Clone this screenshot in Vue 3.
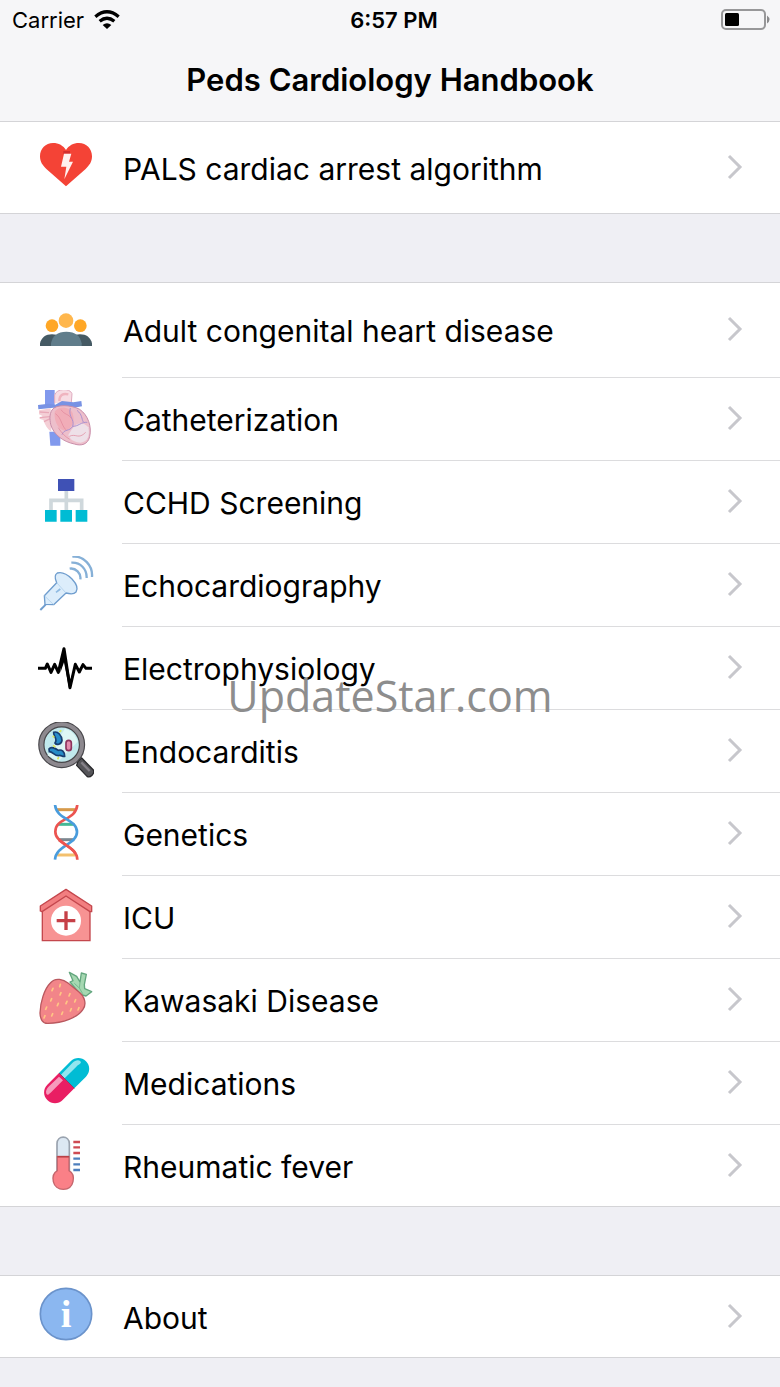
<template>
  <div class="handbook">
    <header class="nav">
      <div class="status">
        <div class="status-left">
          <span>Carrier</span>
          <svg class="wifi" viewBox="0 0 78 57" aria-hidden="true">
            <path d="M4 20Q39-9 74 20M17 34Q39 16 61 34" fill="none" stroke="#000" stroke-width="10" />
            <path d="M26 45Q39 35 52 45L39 57Z" />
          </svg>
        </div>
        <time class="clock">6:57 PM</time>
        <svg class="battery" viewBox="0 0 49 22" aria-hidden="true">
          <rect x="1" y="1" width="43" height="19" rx="4" fill="none" stroke="#979799" stroke-width="2" />
          <rect x="4" y="4" width="14" height="13" rx="1.5" fill="#000" />
          <path d="M46 6.5Q51 10.500 46 14.500Z" fill="#8a8a8c" />
        </svg>
      </div>
      <h1 class="title">Peds Cardiology Handbook</h1>
    </header>

    <main>
      <ul v-for="section in sections" :key="section.id" class="section" :class="section.id">
        <li v-for="item in section.items" :key="item.label">
          <a class="row" href="#">
            <svg class="icon" :viewBox="icons[item.icon].box" aria-hidden="true" v-html="icons[item.icon].art"></svg>
            <span class="cell">
              <span class="label">{{ item.label }}</span>
              <svg class="chevron" viewBox="0 0 16 26" aria-hidden="true">
                <path d="M2 2L13 13L2 24" />
              </svg>
            </span>
          </a>
        </li>
      </ul>
    </main>

    <div class="watermark">UpdateStar.com</div>
  </div>
</template>

<script setup>
const sections = [
  { id: 'arrest', items: [{ label: 'PALS cardiac arrest algorithm', icon: 'aed' }] },
  {
    id: 'topics',
    items: [
      { label: 'Adult congenital heart disease', icon: 'people' },
      { label: 'Catheterization', icon: 'heart' },
      { label: 'CCHD Screening', icon: 'chart' },
      { label: 'Echocardiography', icon: 'probe' },
      { label: 'Electrophysiology', icon: 'pulse' },
      { label: 'Endocarditis', icon: 'microbes' },
      { label: 'Genetics', icon: 'dna' },
      { label: 'ICU', icon: 'hospital' },
      { label: 'Kawasaki Disease', icon: 'strawberry' },
      { label: 'Medications', icon: 'pill' },
      { label: 'Rheumatic fever', icon: 'thermometer' },
    ],
  },
  { id: 'info', items: [{ label: 'About', icon: 'about' }] },
]

const icons = {
  aed: {
    box: '54 25 168 168',
    art: `<path d="M138 170L80 119C68 107 60 97 60 80C60 57 77 40 99 40C116 40 130 48 138 61C146 48 160 40 177 40C199 40 216 57 216 80C216 97 208 107 196 119Z" fill="#f44336"/>
      <path d="M130 64H150V72H130Z" fill="#d32f2f"/>
      <path d="M132 72H154L147 96H159L133 149L139 111H123Z" fill="#fff1ef"/>`,
  },
  people: {
    box: '54 18 168 168',
    art: `<path d="M60 153V145C64 128 77 118 96 118S124 126 128 153Z" fill="#455a64"/>
      <path d="M216 153V145C212 128 199 118 180 118S152 126 148 153Z" fill="#455a64"/>
      <path d="M93 153V145C98 122 112 110 139 110S180 122 185 145V153Z" fill="#607d8b"/>
      <circle cx="96" cy="92" r="19" fill="#ffa726"/>
      <circle cx="181" cy="92" r="19" fill="#ffa726"/>
      <circle cx="138" cy="77" r="22" fill="#ffb74d"/>`,
  },
  heart: {
    box: '54 285 168 168',
    art: `<path d="M75 285H104V330H75ZM88 410H121V452H91Z" fill="#8199ed"/>
      <path d="M104 325V300C109 280 150 278 156 296L154 323" fill="#f7dce3" stroke="#dfabc0" stroke-width="3"/>
      <path d="M118 318C118 301 128 294 145 298" fill="none" stroke="#efb4bf" stroke-width="7"/>
      <path d="M54 330L85 326L106 329L126 318L160 322L184 318L186 334L162 338L136 347L100 338L55 343Z" fill="#7892e4"/>
      <path d="M57 346L92 340L94 410C82 403 75 390 70 375L58 371L68 363L57 358Z" fill="#f4cfd6"/>
      <path d="M59 351L87 353M59 368L90 365M72 380L91 371" stroke="#e8a9b8" stroke-width="4"/>
      <path d="M96 345C107 327 153 329 179 343C204 360 216 395 209 425C204 448 184 454 163 447C129 440 100 418 92 388C89 371 88 359 96 345Z" fill="#edbfcb" stroke="#c98eaa" stroke-width="3"/>
      <path d="M104 350C119 329 151 337 158 355C166 382 156 399 137 407C119 406 101 385 104 350Z" fill="#f1adb8"/>
      <path d="M145 420C166 382 184 376 205 397C210 422 203 441 182 443C163 442 150 434 145 420Z" fill="#eee0e8"/>
      <path d="M151 339C144 367 165 372 158 394C149 410 132 401 126 419M158 394C174 395 184 380 202 382M171 346C188 360 184 371 190 381" fill="none" stroke="#ab91cf" stroke-width="3"/>
      <path d="M106 356C124 368 122 386 137 404M123 344C134 360 145 356 154 370M148 424C168 414 175 435 197 412M115 398C125 414 133 423 149 433" fill="none" stroke="#df8398" stroke-width="2"/>`,
  },
  chart: {
    box: '54 24 168 168',
    art: `<path d="M139 76V138M93 138V106H185V138" fill="none" stroke="#cfd8dc" stroke-width="11"/>
      <rect x="114" y="42" width="49" height="36" fill="#3f51b5"/>
      <path d="M75 135H110V170H75ZM121 135H156V170H121ZM167 135H202V170H167Z" fill="#00bcd4"/>`,
  },
  probe: {
    box: '54 273 168 168',
    art: `<g stroke="#6f9dce" stroke-width="4" stroke-linejoin="round">
        <path d="M61 435L77 419" fill="none" stroke-width="6"/>
        <path d="M75 418L73 392L110 353C105 342 102 330 112 324C126 320 142 328 156 342C169 356 175 371 168 381C162 388 149 387 138 384L101 419Z" fill="#dcedfb"/>
        <path d="M73 392L101 419M110 353L138 384" fill="none" stroke="#a5c8e8" stroke-width="2"/>
        <path d="M108 382L121 372" stroke-width="5" stroke="#8ebae2"/>
        <path d="M149 311C167 308 184 325 181 343M154 293C181 291 201 312 200 339M157 275C191 271 219 302 216 336" fill="none" stroke="#86b0d7" stroke-width="7"/>
      </g>`,
  },
  pulse: {
    box: '54 12 168 168',
    art: `<path d="M54 100H76L82 87L93 112L104 88L115 112L132 41L150 158L166 88L178 111L189 89L198 100H216" fill="none" stroke="#000" stroke-width="9" stroke-linejoin="round"/>
      <path d="M124 76L132 39L140 80L151 134L159 112L151 160H147L132 82L121 113Z" fill="#000"/>`,
  },
  microbes: {
    box: '54 261 168 168',
    art: `<path d="M174 379L185 369L220 405C225 415 211 430 201 424L170 391Z" fill="#555559" stroke="#29292c" stroke-width="4"/>
      <path d="M184 382L209 408" stroke="#858188" stroke-width="7"/>
      <circle cx="125" cy="329" r="61" fill="#c1e9ed" stroke="#48474b" stroke-width="19"/>
      <circle cx="125" cy="329" r="61" fill="none" stroke="#8d898f" stroke-width="12"/>
      <path d="M82 361L135 281C154 285 168 302 173 320L116 379Z" fill="#def6f5"/>
      <path d="M101 292C113 287 126 302 126 316C124 330 109 331 105 324C115 310 99 304 101 292Z" fill="#288cca" stroke="#183d70" stroke-width="5"/>
      <path d="M87 342C93 333 108 341 115 346C125 342 135 351 134 364C127 366 123 359 115 362C103 362 99 351 88 350Z" fill="#268bc7" stroke="#183d70" stroke-width="5"/>
      <rect x="138" y="316" width="16" height="31" rx="8" fill="#e48bad" stroke="#8e345e" stroke-width="5"/>
      <path d="M98 303L103 307M99 331L106 336M116 366L113 373M118 291L124 286" stroke="#dce65a" stroke-width="5"/>`,
  },
  dna: {
    box: '54 30 168 168',
    art: `<path d="M108 44H169" stroke="#d79a4b" stroke-width="9"/>
      <path d="M115 88H163" stroke="#45b896" stroke-width="9"/>
      <path d="M115 134H163" stroke="#7c8790" stroke-width="9"/>
      <path d="M109 180H168" stroke="#f3c06e" stroke-width="9"/>
      <path d="M172 28C169 78 106 67 106 110C106 148 171 151 172 194" fill="none" stroke="#ec5450" stroke-width="8"/>
      <path d="M105 28C108 76 171 70 171 111C171 148 107 151 105 194" fill="none" stroke="#499cdd" stroke-width="8"/>
      <path d="M118 136C133 150 156 158 166 175" fill="none" stroke="#ec5450" stroke-width="8"/>`,
  },
  hospital: {
    box: '54 279 168 168',
    art: `<path d="M67 337L138 286L210 337V437H67Z" fill="#f79393" stroke="#c4474d" stroke-width="4"/>
      <path d="M61 333L138 283L215 333V350L210 350L138 303L66 350L61 348Z" fill="#f27e80" stroke="#c4474d" stroke-width="4" stroke-linejoin="round"/>
      <circle cx="138" cy="377" r="45" fill="#fff"/>
      <path d="M138 349V405M110 377H166" stroke="#c64047" stroke-width="10"/>`,
  },
  strawberry: {
    box: '54 33 168 168',
    art: `<path d="M150 66L159 62L148 37L170 49L180 66L184 39L199 43L193 74L194 86L215 95L198 108L181 103Z" fill="#a6d8b2" stroke="#63a67e" stroke-width="4" stroke-linejoin="round"/>
      <path d="M163 70L178 84L188 101M180 67L178 84" fill="none" stroke="#78b88e" stroke-width="3"/>
      <path d="M91 69C107 50 131 59 145 70L177 96C193 108 201 132 189 148C173 173 129 189 84 190C67 191 61 177 60 159C61 126 73 87 91 69Z" fill="#f28589" stroke="#b9585f" stroke-width="4"/>
      <path d="M99 85L96 92M121 73L119 80M123 98L120 105M150 101L147 108M95 116L92 123M115 130L112 137M141 124L138 131M167 119L164 126M80 141L77 148M98 161L95 168M128 156L125 163M154 146L151 153M177 143L174 150M75 167L72 174" stroke="#ffc684" stroke-width="5" stroke-linecap="round"/>`,
  },
  pill: {
    box: '54 282 168 168',
    art: `<path d="M117 339L152 304C165 291 185 291 198 304S211 337 198 350L163 385Z" fill="#00bcd4"/>
      <path d="M117 339L163 385L128 420C115 433 95 433 82 420S69 387 82 374Z" fill="#e91e63"/>
      <path d="M123 344L157 309C166 300 176 299 181 304C187 310 176 313 169 320L134 355Z" fill="#91e5ef"/>
      <path d="M117 350L129 361L97 393C88 402 83 408 79 401C76 394 80 386 87 379Z" fill="#f69bbc"/>
      <path d="M117 339L163 385" stroke="#874269" stroke-width="3"/>`,
  },
  thermometer: {
    box: '54 34 168 168',
    art: `<path d="M111 141V57C111 31 148 31 148 57V141" fill="#dce8f3" stroke="#9aa3af" stroke-width="5"/>
      <path d="M112 96H147V138C160 145 162 157 159 171C156 185 145 194 130 194S103 185 100 171C97 157 100 145 112 138Z" fill="#fa8087" stroke="#c4666d" stroke-width="4"/>
      <path d="M112 96H147" stroke="#ba4147" stroke-width="5"/>
      <path d="M160 52H180M160 68H180M160 85H180" stroke="#ce4b53" stroke-width="7"/>
      <path d="M160 102H180M160 119H180M160 136H180" stroke="#4d7fbd" stroke-width="7"/>`,
  },
  about: {
    box: '54 262 168 168',
    art: `<circle cx="138" cy="343" r="77" fill="#8bb7f0" stroke="#6b93cb" stroke-width="5"/>
      <text x="138" y="383" font-family="Liberation Serif, serif" font-size="116" font-weight="700" text-anchor="middle" fill="#fff">i</text>`,
  },
}
</script>

<style>
body {
  margin: 0;
  background: #efeff4;
}
</style>

<style scoped>
.handbook {
  position: relative;
  box-sizing: border-box;
  min-height: 100vh;
  padding-bottom: 29px;
  background: #efeff4;
  color: #000;
  font-family: Inter, 'Liberation Sans', sans-serif;
}
.nav {
  padding-bottom: 21px;
  background: #f6f6f8;
  border-bottom: 1px solid #d4d4d7;
}
.status {
  display: grid;
  grid-template-columns: 1fr auto 1fr;
  align-items: center;
  height: 40px;
  padding: 0 10px 0 12px;
  font-size: 22px;
}
.status-left {
  display: flex;
  align-items: center;
  gap: 10px;
}
.wifi {
  width: 26px;
  height: 19px;
  margin-bottom: 2px;
}
.clock {
  padding-left: 6px;
  font-weight: 600;
}
.battery {
  justify-self: end;
  width: 49px;
  height: 22px;
  margin-bottom: 1px;
}
.title {
  margin: 0;
  padding-top: 20px;
  font-size: 31px;
  font-weight: 600;
  line-height: 40px;
  text-align: center;
}
.section {
  margin: 0 0 68px;
  padding: 0;
  list-style: none;
  background: #fff;
  border-top: 1px solid #d4d4d7;
  border-bottom: 1px solid #d4d4d7;
}
.section:last-child {
  margin-bottom: 0;
}
.arrest {
  border-top: 0;
}
.row {
  display: flex;
  align-items: center;
  padding-left: 38px;
  color: inherit;
  text-decoration: none;
}
.icon {
  flex: none;
  width: 56px;
  height: 56px;
  margin: 0 28px 4px 0;
}
.cell {
  flex: 1;
  display: flex;
  align-items: center;
  justify-content: space-between;
  min-height: 82px;
  padding: 0 37px 0 1px;
  border-bottom: 1px solid #dcdcde;
}
li:last-child .cell {
  min-height: 81px;
  border-bottom: 0;
}
.arrest li .cell {
  min-height: 91px;
}
.topics li:first-child .cell {
  min-height: 94px;
}
.label {
  padding-top: 2px;
  font-size: 30px;
  line-height: 40px;
}
.chevron {
  flex: none;
  width: 16px;
  height: 26px;
  margin-bottom: 2px;
  fill: none;
  stroke: #c7c7cc;
  stroke-width: 3;
}
.watermark {
  position: absolute;
  top: 50%;
  left: 0;
  right: 0;
  color: #8d8d8d;
  font-family: 'Open Sans', 'Noto Sans', sans-serif;
  font-size: 43px;
  line-height: 60px;
  margin-top: -28px;
  text-align: center;
  pointer-events: none;
}
</style>
